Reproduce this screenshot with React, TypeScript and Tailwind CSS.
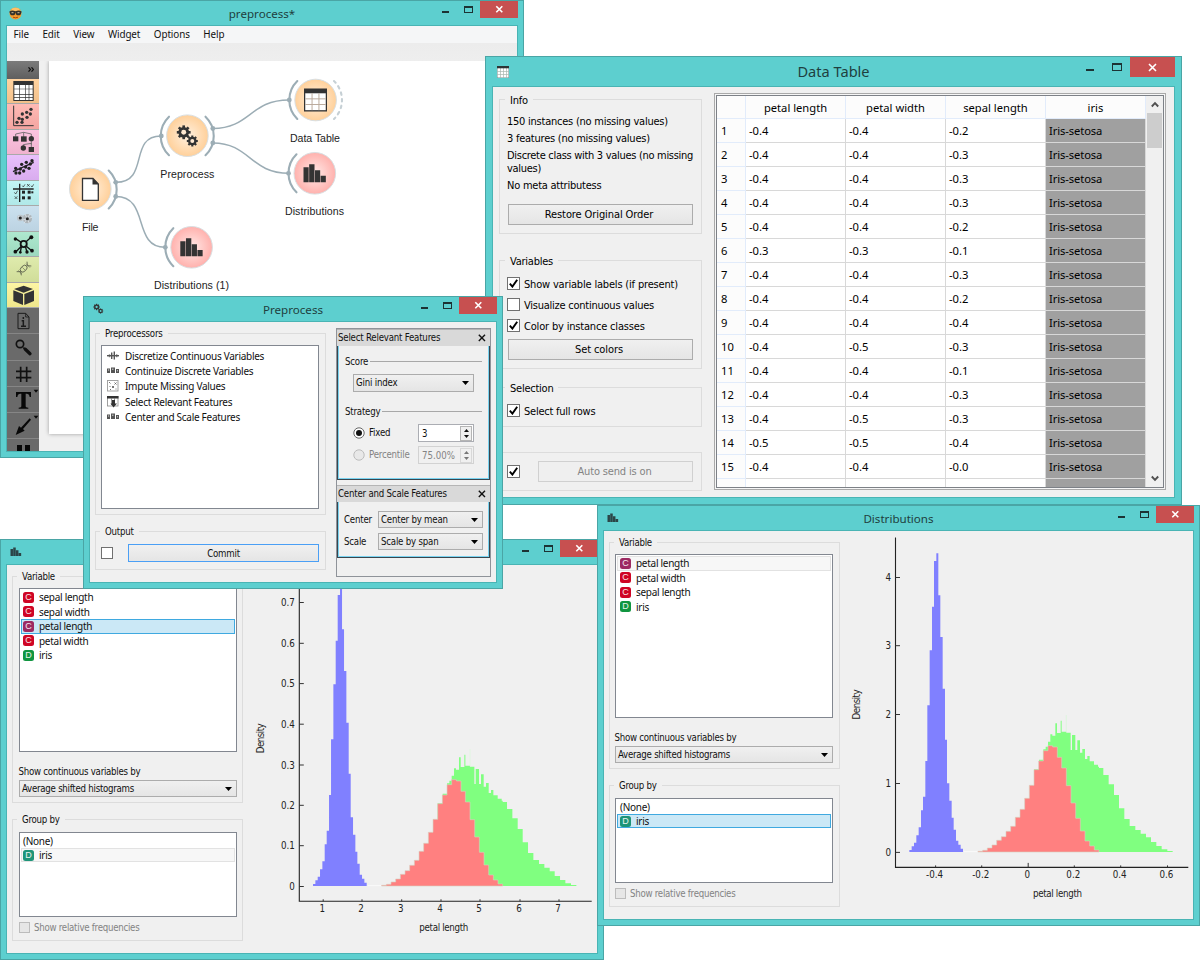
import React from "react";

const UI = "font-['Noto_Sans','Open_Sans',sans-serif]";
const TAHOMA = "font-['DejaVu_Sans_Condensed','DejaVu_Sans',sans-serif] [font-stretch:condensed]";

/* ---------- window frame ---------- */

type WinProps = {
  title: string;
  place: string;
  icon: React.ReactNode;
  large?: boolean;
  children: React.ReactNode;
};

function Win({ title, place, icon, large, children }: WinProps) {
  return (
    <section
      className={`absolute flex flex-col border border-[#4aa5a5] bg-[#5dcfcf] ${large ? "px-[6px] pb-[6px]" : "px-[5px] pb-[5px]"} ${place}`}
    >
      <header className={`flex shrink-0 items-center ${large ? "h-[29px]" : "h-[24px]"}`}>
        <div className="flex flex-1 items-center pl-[3px]">{icon}</div>
        <h2
          className={`whitespace-nowrap text-[#1f3f40] ${UI} ${large ? "-mt-[2px] mr-[3px] text-[14.6px] leading-[20px]" : "mr-[3px] text-[11.6px] leading-[17px]"}`}
        >
          {title}
        </h2>
        <div className="flex flex-1 justify-end self-start">
          {large ? (
            <svg width="46" height="20" viewBox="0 0 46 20">
              <rect x="2" y="12" width="8" height="2" fill="#1c3334" />
              <path d="M28 6h10v8h-10z M29 8v5h8v-5z" fill="#1c3334" fillRule="evenodd" />
            </svg>
          ) : (
            <svg width="40" height="18" viewBox="0 0 40 18">
              <rect x="2" y="10" width="7" height="2" fill="#1c3334" />
              <path d="M24 5h9v7h-9z M25 7v4h7v-4z" fill="#1c3334" fillRule="evenodd" />
            </svg>
          )}
          <div className={`flex items-center justify-center bg-[#c75050] ${large ? "h-[20px] w-[45px]" : "h-[17px] w-[38px]"}`}>
            <svg width="9" height="9" viewBox="0 0 9 9" stroke="#fff" strokeWidth="1.6">
              {large ? <path d="M1 1l7 7M8 1l-7 7" /> : <path d="M1.3 1.3l6 6M7.3 1.3l-6 6" />}
            </svg>
          </div>
        </div>
      </header>
      <div className="flex min-h-0 flex-1 overflow-hidden border border-[#49b4b4] bg-[#f0f0f0]">{children}</div>
    </section>
  );
}

/* ---------- shared widgets ---------- */

function Group({ label, box, children }: { label?: string; box: string; children: React.ReactNode }) {
  return (
    <fieldset className={`relative shrink-0 border border-[#dcdcdc] ${box}`}>
      {label && <div className="absolute -top-[7px] left-[4px] bg-[#f0f0f0] px-[5px] leading-[14px]">{label}</div>}
      {children}
    </fieldset>
  );
}

function Check({ on, size = "size-[13px]", off }: { on?: boolean; size?: string; off?: boolean }) {
  return (
    <span className={`flex shrink-0 items-center justify-center border ${size} ${off ? "border-[#bcbcbc] bg-[#e6e6e6]" : "border-[#707070] bg-white"}`}>
      {on && (
        <svg width="9" height="9" viewBox="0 0 9 9">
          <path d="M0.8 4.6L3.4 7.6L8.2 0.8" fill="none" stroke="#000" strokeWidth="1.9" />
        </svg>
      )}
    </span>
  );
}

function Combo({ value, box }: { value: string; box: string }) {
  return (
    <div
      className={`flex shrink-0 items-center justify-between whitespace-nowrap border border-[#acacac] bg-linear-to-b from-[#f0f0f0] to-[#e5e5e5] pl-[2px] pr-[4px] ${box}`}
    >
      <span>{value}</span>
      <svg width="7" height="4" viewBox="0 0 7 4">
        <path d="M0 0h7L3.5 4z" fill="#000" />
      </svg>
    </div>
  );
}

/* ---------- main window icons ---------- */

const toolCells = [
  {
    bg: "from-[#ffd3a0] to-[#f3c08a]",
    art: (
      <g>
        <rect x="19" y="6" width="61" height="60" fill="#333" />
        <path d="M22 18h15v11H22zM39 18h15v11H39zM56 18h9v11h-9zM67 18h10v11H67zM22 31h15v14H22zM39 31h15v14H39zM56 31h9v14h-9zM67 31h10v14H67zM22 47h15v7H22zM39 47h15v7H39zM56 47h9v7h-9zM67 47h10v7H67zM22 56h15v7H22zM39 56h15v7H39zM56 56h9v7h-9zM67 56h10v7H67z" fill="#fff" />
      </g>
    ),
  },
  {
    bg: "from-[#ffbab5] to-[#f4a5a1]",
    art: (
      <g fill="#333">
        <path d="M20 5v60h60" fill="none" stroke="#333" strokeWidth="3" />
        {[[30, 55], [36, 43], [46, 46], [46, 30], [60, 40], [59, 25], [70, 30], [72, 16], [45, 55]].map(([x, y]) => (
          <circle key={`${x}-${y}`} cx={x} cy={y} r="5" />
        ))}
      </g>
    ),
  },
  {
    bg: "from-[#fbc4e0] to-[#f0b2cf]",
    art: (
      <g fill="#333">
        <path d="M26 20V12L50 7L73 12V20M50 7v16M73 30v14M49 54V44L73 40v14" fill="none" stroke="#666" strokeWidth="2.5" />
        <rect x="18" y="19" width="16" height="15" />
        <rect x="42" y="19" width="17" height="16" />
        <circle cx="73" cy="26" r="8" />
        <circle cx="49" cy="54" r="8" />
        <rect x="65" y="51" width="16" height="15" />
      </g>
    ),
  },
  {
    bg: "from-[#e8c0fb] to-[#d9acef]",
    art: (
      <g fill="#222">
        <path d="M18 50L80 22" stroke="#222" strokeWidth="4" />
        {[[26, 40], [27, 54], [38, 54], [40, 42], [44, 28], [50, 48], [56, 36], [58, 22], [66, 40], [70, 27], [75, 17]].map(([x, y]) => (
          <circle key={`${x}-${y}`} cx={x} cy={y} r="5" />
        ))}
      </g>
    ),
  },
  {
    bg: "from-[#c3f6f6] to-[#b0e8e8]",
    art: (
      <g fill="#222">
        <path d="M18 24h62M38 8v55" stroke="#222" strokeWidth="4" />
        <path d="M46 14l3 4l5-8M60 9l8 8M68 9l-8 8M72 14l3 4l5-8M22 34l4 5l6-10M23 46l8 8M31 46l-8 8" fill="none" stroke="#222" strokeWidth="2" />
        <rect x="45" y="29" width="9" height="9" />
        <rect x="62" y="29" width="9" height="9" />
        <rect x="45" y="46" width="9" height="9" />
        <rect x="62" y="46" width="9" height="9" />
        <rect x="73" y="31" width="6" height="6" />
      </g>
    ),
  },
  {
    bg: "from-[#cbe1ef] to-[#bcd3e2]",
    art: (
      <g>
        <circle cx="40" cy="36" r="10" fill="#bcc4c9" />
        <circle cx="61" cy="38" r="14" fill="#aeb5b9" />
        <path d="M33 30l14 12M54 24l13 28M47 42l28-8M51 52l18-28" stroke="#dde5ea" strokeWidth="2.5" />
        <circle cx="40" cy="36" r="4.5" fill="#222" />
        <circle cx="61" cy="38" r="4.5" fill="#222" />
      </g>
    ),
  },
  {
    bg: "from-[#aee8cf] to-[#9cd9be]",
    art: (
      <g fill="#111">
        <path d="M50 36L26 20M50 36L72 16M50 36L26 60M50 36L74 56M44 40L40 60M54 40L60 60" stroke="#111" strokeWidth="4" />
        <circle cx="50" cy="36" r="12" />
        <circle cx="50" cy="36" r="6.5" fill="#a8e2c8" />
        <circle cx="25" cy="21" r="5" />
        <circle cx="73" cy="16" r="6" />
        <circle cx="25" cy="59" r="5.5" />
        <circle cx="40" cy="61" r="4" />
        <circle cx="60" cy="60" r="5" />
        <circle cx="75" cy="56" r="5.5" />
      </g>
    ),
  },
  {
    bg: "from-[#dfebad] to-[#d0dd99]",
    art: (
      <g fill="none" stroke="#5c604c" strokeWidth="2.6">
        <ellipse cx="50" cy="35" rx="12" ry="8" transform="rotate(-45 50 35)" />
        <path d="M29 44h12l2 11M60 14l1 12l12 1" />
        <path d="M34 40l10 11M57 20l12 12M46 31l8 8" strokeWidth="1.8" />
      </g>
    ),
  },
  {
    bg: "from-[#fcf5a4] to-[#efe78c]",
    art: (
      <g fill="#333">
        <path d="M50 8L78 18L50 29L21 18z" />
        <path d="M19 22L48 33V66L19 54z" />
        <path d="M81 22L52 33V66L81 54z" />
      </g>
    ),
  },
];

const darkCells = [
  <g key="info" fill="none" stroke="#1b1b1b" strokeWidth="3">
    <path d="M33 16h23l10 11v35H33z" />
    <path d="M56 16v11h10" strokeWidth="2.5" />
    <path d="M49 27v6M44 38h5v16M42 55h15" strokeWidth="4.5" />
  </g>,
  <g key="find" fill="none" stroke="#111">
    <circle cx="39" cy="30" r="11" strokeWidth="5" />
    <path d="M49 41l5 4" strokeWidth="5" />
    <path d="M55 46l14 13" strokeWidth="10" strokeLinecap="round" />
  </g>,
  <path key="grid" d="M41 17v46M59 17v46M27 31h46M27 50h46" stroke="#111" strokeWidth="5" />,
  <g key="text" fill="#080808">
    <path d="M27 15h45v15h-4c-1-7-4-10-9-10h-3v37c0 4 2 5 8 5v3H35v-3c6 0 8-1 8-5V20h-3c-5 0-8 3-9 10h-4z" />
    <path d="M80 8h14l-7 9z" />
  </g>,
  <g key="arrow" fill="#080808">
    <path d="M68 16l4 4L48 48l5 5L26 66l10-27l6 5z" />
    <path d="M80 8h14l-7 9z" />
  </g>,
  <path key="pause" d="M30 18h15v40H30zM54 18h15v40H54z" fill="#080808" />,
];

function Gear({ cx, cy, r, hole }: { cx: number; cy: number; r: number; hole: string }) {
  return (
    <g transform={`translate(${cx} ${cy})`}>
      <circle r={r * 0.78} fill="#333" />
      {[0, 45, 90, 135].map((a) => (
        <rect key={a} x={-r * 0.19} y={-r} width={r * 0.38} height={r * 2} fill="#333" transform={`rotate(${a})`} />
      ))}
      <circle r={r * 0.36} fill={hole} />
    </g>
  );
}

function TableGlyph({ x, y, s }: { x: number; y: number; s: number }) {
  return (
    <g transform={`translate(${x} ${y}) scale(${s / 24})`}>
      <rect width="24" height="24" fill="#333" />
      <path d="M1.3 5h21.4v17.6H1.3z" fill="#fff" />
      <path d="M8.4 5v17.6M15.6 5v17.6M1.3 10.8h21.4M1.3 16.7h21.4" stroke="#b9a89a" strokeWidth="1" />
    </g>
  );
}

function BarsGlyph({ x, y, s, fill = "#333" }: { x: number; y: number; s: number; fill?: string }) {
  return (
    <path
      transform={`translate(${x} ${y}) scale(${s / 66})`}
      d="M0 9h15.500v45H0zM17 0h16v54H17zM34.500 18h15.500v36H34.500zM51.500 35h15.500v19H51.500z"
      fill={fill}
    />
  );
}

const nodeText = "fill-[#222] font-['Liberation_Sans',Arial,sans-serif] text-[10.6px]";

function Workflow() {
  const arc = { fill: "none", stroke: "#9cadb5", strokeWidth: 2.1, strokeLinecap: "round" as const };
  return (
    <svg className="block" width="468" height="373" viewBox="49 61 468 373">
      <defs>
        <radialGradient id="orange">
          <stop offset="0" stopColor="#fff0df" />
          <stop offset="1" stopColor="#ffd09a" />
        </radialGradient>
        <radialGradient id="rose">
          <stop offset="0" stopColor="#ffe9e7" />
          <stop offset="1" stopColor="#ffb1ad" />
        </radialGradient>
      </defs>
      <g fill="none" stroke="#9cadb5" strokeWidth="1.5">
        <path d="M116 182.300C150 182.300 128 136 161 136" />
        <path d="M116 196.500C150 196.500 132 247.300 165 247.300" />
        <path d="M213 128.500C250 128.500 250 100 289 100" />
        <path d="M213 143C250 143 250 173.300 289 173.300" />
      </g>
      <g {...arc}>
        <path d="M108.700 170.500A26.600 26.600 0 0 1 108.700 208.500" />
        <path d="M169 116.700A26.600 26.600 0 0 0 169 155.200" />
        <path d="M205.500 116.700A26.600 26.600 0 0 1 205.500 155.200" />
        <path d="M173.300 228.200A26.600 26.600 0 0 0 173.300 266.200" />
        <path d="M297.300 81A26.600 26.600 0 0 0 297.300 119" />
        <path d="M296.500 154.300A26.600 26.600 0 0 0 296.500 192.300" />
        <path d="M334 81A26.600 26.600 0 0 1 334 119" stroke="#c6d0d5" strokeDasharray="2.500 4.200" />
      </g>
      <g fill="#9cadb5">
        {[[115.7, 182.3], [115.7, 196.5], [161.3, 136], [165.3, 247.3], [212.8, 128.5], [212.8, 143], [289.3, 100], [288.5, 173.3]].map(([x, y]) => (
          <circle key={`${x}-${y}`} cx={x} cy={y} r="2.400" />
        ))}
      </g>
      <g stroke="#d9dfe2" strokeWidth="1">
        <circle cx="90.300" cy="189" r="20.800" fill="url(#orange)" />
        <circle cx="187.400" cy="135.700" r="20.800" fill="url(#orange)" />
        <circle cx="315.600" cy="100" r="20.800" fill="url(#orange)" />
        <circle cx="191.600" cy="247.300" r="20.800" fill="url(#rose)" />
        <circle cx="314.800" cy="173.300" r="20.800" fill="url(#rose)" />
      </g>
      <path d="M82.500 178.500h10.500l5.300 5.500v16.300h-15.800z" fill="#fff" stroke="#333" strokeWidth="1.300" />
      <path d="M92.500 178l6.300 6.500h-6.300z" fill="#333" />
      <Gear cx={183.7} cy={132.3} r={6.9} hole="#ffe9d2" />
      <Gear cx={192.3} cy={141} r={5.5} hole="#ffe9d2" />
      <TableGlyph x={304} y={88.5} s={23} />
      <BarsGlyph x={180.3} y={238.3} s={22} />
      <BarsGlyph x={303.5} y={164.2} s={22} />
      <g className={nodeText}>
        <text x="82" y="230.800" textLength="16.500">File</text>
        <text x="160.300" y="177.500" textLength="54">Preprocess</text>
        <text x="154" y="289" textLength="75">Distributions (1)</text>
        <text x="290" y="142" textLength="50">Data Table</text>
        <text x="285" y="215" textLength="59">Distributions</text>
      </g>
    </svg>
  );
}

function MainWindow() {
  return (
    <Win
      title="preprocess*"
      place="left-0 top-0 h-[458px] w-[524px]"
      icon={
        <svg width="13" height="13" viewBox="0 0 13 13">
          <circle cx="6.500" cy="6.500" r="6" fill="#f49b2c" />
          <ellipse cx="6.500" cy="2.800" rx="4" ry="2" fill="#ffc267" />
          <path d="M0.500 4.200h12v1.500h-12z" fill="#33302a" />
          <ellipse cx="3.600" cy="5.900" rx="2.700" ry="2.300" fill="#33302a" />
          <ellipse cx="9.400" cy="5.900" rx="2.700" ry="2.300" fill="#33302a" />
          <path d="M2.500 5.600h2M8.500 5.600h2" stroke="#b5a684" strokeWidth="1.200" />
          <path d="M4 10.200q2.500 1.200 5 0" stroke="#a34c10" fill="none" />
        </svg>
      }
    >
      <div className="flex flex-1 flex-col">
        <nav className={`flex h-[17px] shrink-0 items-center gap-[13.500px] bg-[#f5f6f7] pl-[6.500px] text-[9.900px] tracking-[-0.100px] text-[#111] ${UI}`}>
          {["File", "Edit", "View", "Widget", "Options", "Help"].map((m) => (
            <span key={m}>{m}</span>
          ))}
        </nav>
        <div className="h-[18px] shrink-0 bg-linear-to-b from-[#ececec] to-[#eee]" />
        <div className="flex min-h-0 flex-1">
          <div className="w-[32px] shrink-0 overflow-hidden">
            <div className="flex h-[17.500px] items-center justify-end bg-linear-to-b from-[#7b7b7b] to-[#5f5f5f] pr-[5px]">
              <svg width="6" height="5" viewBox="0 0 6 5" fill="none" stroke="#111" strokeWidth="1.200">
                <path d="M0.500 0.300l2 2.200l-2 2.200M3.500 0.300l2 2.200l-2 2.200" />
              </svg>
            </div>
            {toolCells.map((c, i) => (
              <div key={i} className={`h-[25.500px] border-b border-[#a9a9a9] bg-linear-to-b ${c.bg}`}>
                <svg width="32" height="25" viewBox="0 0 96 75">{c.art}</svg>
              </div>
            ))}
            {darkCells.map((c, i) => (
              <div key={i} className="h-[26.300px] border-b border-[#868686] bg-[#6a6a6a]">
                <svg width="32" height="26" viewBox="0 0 96 78">{c}</svg>
              </div>
            ))}
          </div>
          <div className="min-w-0 flex-1 overflow-hidden pl-[10px]">
            <div className="h-[373px] w-[480px] bg-white shadow-[0_0_4px_rgba(0,0,0,0.35)]">
              <Workflow />
            </div>
          </div>
        </div>
      </div>
    </Win>
  );
}

/* ---------- data table window ---------- */

const rows = [
  ["-0.4", "-0.4", "-0.2"], ["-0.4", "-0.4", "-0.3"], ["-0.4", "-0.4", "-0.3"], ["-0.4", "-0.4", "-0.3"],
  ["-0.4", "-0.4", "-0.2"], ["-0.3", "-0.3", "-0.1"], ["-0.4", "-0.4", "-0.3"], ["-0.4", "-0.4", "-0.2"],
  ["-0.4", "-0.4", "-0.4"], ["-0.4", "-0.5", "-0.3"], ["-0.4", "-0.4", "-0.1"], ["-0.4", "-0.4", "-0.3"],
  ["-0.4", "-0.5", "-0.3"], ["-0.5", "-0.5", "-0.4"], ["-0.4", "-0.4", "-0.0"], ["", "", ""],
];

function CheckLine({ on, children, box }: { on?: boolean; box: string; children: React.ReactNode }) {
  return (
    <div className={`flex h-[13px] items-center gap-[4px] ${box}`}>
      <Check on={on} />
      <span className="pt-[3px]">{children}</span>
    </div>
  );
}

const button =
  "flex shrink-0 items-center justify-center border border-[#acacac] bg-linear-to-b from-[#f0f0f0] to-[#e5e5e5] pt-[2px] pr-[3px] tracking-[-0.100px]";

function DataTableWindow() {
  return (
    <Win
      large
      title="Data Table"
      place="left-[485px] top-[56px] h-[449px] w-[697px]"
      icon={
        <svg className="ml-[2px]" width="12" height="12" viewBox="0 0 12 12">
          <rect width="12" height="12" fill="#fff" stroke="#7a8a8a" />
          <path d="M3.500 2v10M6.500 2v10M9.500 2v10M0 5.500h12M0 8.500h12" stroke="#a9b8b0" strokeWidth=".7" />
          <rect width="12" height="2.300" fill="#2d3435" />
        </svg>
      }
    >
      <div className={`flex w-[221px] shrink-0 flex-col whitespace-nowrap pl-[6px] pt-[12px] text-[11px] tracking-[-0.240px] text-black ${TAHOMA}`}>
        <Group label="Info" box="h-[135px] w-[203px] pl-[7px] pt-[15px] [&>div:first-child]:-top-[6px] [&>div:first-child]:left-[5px]">
          <div className="flex flex-col gap-[3px] leading-[14px]">
            <p>150 instances (no missing values)</p>
            <p>3 features (no missing values)</p>
            <p className="leading-[13px] tracking-[-0.300px]">
              Discrete class with 3 values (no missing
              <br />
              values)
            </p>
            <p className="mt-[1px]">No meta attributess</p>
          </div>
          <div className={`ml-px mt-[11px] h-[21px] w-[185px] ${button}`}>Restore Original Order</div>
        </Group>
        <Group label="Variables" box="mt-[26px] h-[109px] w-[203px] pl-[7px] pt-[16px] [&>div:first-child]:-top-[6px] [&>div:first-child]:left-[5px]">
          <CheckLine on box="tracking-[-0.180px]">Show variable labels (if present)</CheckLine>
          <CheckLine box="mt-[8px]">Visualize continuous values</CheckLine>
          <CheckLine on box="mt-[8px] tracking-[-0.180px]">Color by instance classes</CheckLine>
          <div className={`ml-px mt-[7px] h-[21px] w-[185px] ${button}`}>Set colors</div>
        </Group>
        <Group label="Selection" box="mt-[18px] h-[40px] w-[203px] pl-[7px] pt-[16px] [&>div:first-child]:-top-[6px] [&>div:first-child]:left-[5px]">
          <CheckLine on box="">Select full rows</CheckLine>
        </Group>
        <Group box="mt-[25px] h-[39px] w-[203px] pl-[7px] pt-[8px]">
          <div className="flex items-center">
            <Check on />
            <div className="ml-[18px] flex h-[21px] w-[155px] items-center justify-center border border-[#d0d0d0] bg-[#efefef] pr-[2px] pt-[2px] tracking-[-0.150px] text-[#838383]">
              Auto send is on
            </div>
          </div>
        </Group>
      </div>
      <div className="mt-[6px] h-[397px] w-[452px] border border-[#a9a9a9] bg-[#f6f6f6] p-px">
        <div className={`flex h-[393px] overflow-hidden border border-[#7d8187] bg-white text-[11.200px] text-black ${UI}`}>
          <div className="w-[429px] shrink-0">
            <div className="flex h-[23px] border-b border-[#e2ecfb] bg-[#fcfcfc]">
              <div className="w-[29px] border-r border-[#e2ecfb]" />
              {["petal length", "petal width", "sepal length", "iris"].map((h) => (
                <div key={h} className="flex w-[100px] items-center justify-center border-r border-[#e2ecfb] pt-[2px]">{h}</div>
              ))}
            </div>
            {rows.map((r, i) => (
              <div key={i} className="flex h-[24px] leading-[23px]">
                <div className="w-[29px] border-b border-r border-[#e2ecfb] bg-[#fcfcfc] pl-[4px]">{i < 15 ? i + 1 : ""}</div>
                {r.map((v, j) => (
                  <div key={j} className="w-[100px] border-b border-r border-[#d8d8d8] pl-[3px]">{v}</div>
                ))}
                <div className="w-[100px] border-b border-r border-[#d8d8d8] bg-[#a0a0a0] pl-[3px] tracking-[-0.100px]">{i < 15 ? "Iris-setosa" : ""}</div>
              </div>
            ))}
          </div>
          <div className="flex flex-1 flex-col items-center justify-between bg-[#f0f0f0]">
            <div className="flex w-full flex-col items-center">
              <svg className="my-[5px]" width="8" height="7" viewBox="0 0 8 7" fill="none" stroke="#505050" strokeWidth="1.900">
                <path d="M0.800 5.500L4 2.200L7.200 5.500" />
              </svg>
              <div className="h-[35px] w-[15px] bg-[#cdcdcd]" />
            </div>
            <svg className="mb-[5px]" width="8" height="7" viewBox="0 0 8 7" fill="none" stroke="#505050" strokeWidth="1.900">
              <path d="M0.800 1.500L4 4.800L7.200 1.500" />
            </svg>
          </div>
        </div>
      </div>
    </Win>
  );
}

/* ---------- preprocess window ---------- */

const discretize = (
  <g fill="#555">
    <path d="M0 5h12v1.400H0z" />
    <path d="M4 2.500h1.400v6.500H4zM6.600 1.500H8v8H6.600z" />
    <path d="M1.800 4.200h1.400v3H1.800zM9 4.200h1.400v3H9z" opacity=".7" />
  </g>
);
const continuize = (
  <g fill="#555">
    <rect x="0" y="3.500" width="3" height="4.500" />
    <rect x="4" y="2.500" width="4" height="5.500" />
    <rect x="9" y="4" width="3" height="4" />
    <path d="M1 5h1.200M5 4.200h1.500M10 5.800h1" stroke="#ddd" />
  </g>
);
const impute = (
  <g stroke="#666" strokeWidth=".9" fill="none">
    <rect x=".5" y=".5" width="10.500" height="10.500" stroke="#9a9a9a" />
    <path d="M2 2l1.500 1.500M7.500 2.500l2 2M9.500 2.500l-2 2M2.500 6l1 1M5 6l2 2M7 6l-2 2M3 9.500h1M8.500 9h1" />
  </g>
);
const select = (
  <g>
    <rect x=".5" y=".5" width="10.500" height="9.500" fill="#fff" stroke="#888" strokeWidth=".8" />
    <rect x="0" y="0" width="11.500" height="2.500" fill="#333" />
    <path d="M4.500 2v7M7.500 2v7" stroke="#777" strokeWidth=".8" />
    <path d="M5 4h3v3.500h2L6.500 11.500L3.500 7.500H5z" fill="#333" />
  </g>
);

const preprocessors = [
  { name: "Discretize Continuous Variables", art: discretize },
  { name: "Continuize Discrete Variables", art: continuize },
  { name: "Impute Missing Values", art: impute },
  { name: "Select Relevant Features", art: select },
  { name: "Center and Scale Features", art: continuize },
];

function Panel({ title, body, children }: { title: string; body: string; children: React.ReactNode }) {
  return (
    <div>
      <div className="flex h-[17px] items-center justify-between border-t border-[#b5b5b5] bg-[#d9d9d9] pl-[1px] pr-[4px]">
        <span>{title}</span>
        <svg width="8" height="8" viewBox="0 0 8 8" stroke="#111" strokeWidth="1.400">
          <path d="M.8.8l6.200 6.200M7 .8L.8 7" />
        </svg>
      </div>
      <div className="border border-t-0 border-[#39454d]">
        <div className={`border border-t-0 border-[#7ad3f0] ${body}`}>{children}</div>
      </div>
    </div>
  );
}

function Rule({ label, box }: { label: string; box: string }) {
  return (
    <div className={`flex h-[14px] items-center gap-[2px] ${box}`}>
      <span>{label}</span>
      <span className="mt-[-1px] h-px flex-1 bg-[#a8a8a8]" />
    </div>
  );
}

function Spin({ value, off }: { value: string; off?: boolean }) {
  return (
    <div className={`flex h-[18px] w-[56px] items-center justify-between border pl-[3px] pr-[1px] ${off ? "border-[#d2d2d2] text-[#838383]" : "border-[#abadb3] bg-white"}`}>
      <span className="pt-[2px] tracking-normal">{value}</span>
      <div className={`flex h-[15px] w-[12px] flex-col items-center justify-center gap-[3px] border bg-[#f0f0f0] ${off ? "border-[#d8d8d8]" : "border-[#b5b5b5]"}`}>
        <svg width="5" height="3" viewBox="0 0 5 3"><path d="M0 3h5L2.500 0z" fill={off ? "#777" : "#111"} /></svg>
        <svg width="5" height="3" viewBox="0 0 5 3"><path d="M0 0h5L2.500 3z" fill={off ? "#777" : "#111"} /></svg>
      </div>
    </div>
  );
}

function PreprocessWindow() {
  return (
    <Win
      title="Preprocess"
      place="left-[83px] top-[296px] h-[293px] w-[420px]"
      icon={
        <svg className="ml-px" width="12" height="12" viewBox="0 0 12 12">
          <Gear cx={3.6} cy={4} r={3.2} hole="#5dcfcf" />
          <Gear cx={7.6} cy={8} r={2.6} hole="#5dcfcf" />
        </svg>
      }
    >
      <div className={`flex flex-1 whitespace-nowrap text-[9.600px] leading-[14px] tracking-[-0.200px] text-[#111] ${TAHOMA}`}>
        <div className="flex w-[246px] flex-col pl-[5px] pt-[11px]">
          <Group label="Preprocessors" box="h-[182px] w-[231px] pl-[5px] pt-[11px]">
            <ul className={`h-[164px] w-[218px] border border-[#828790] bg-white pt-[2px] text-[10px] tracking-[-0.280px] ${UI}`}>
              {preprocessors.map((p) => (
                <li key={p.name} className="flex h-[15.300px] items-center gap-[6px] pl-[5px]">
                  <svg width="12" height="12" viewBox="0 0 12 12">{p.art}</svg>
                  <span>{p.name}</span>
                </li>
              ))}
            </ul>
          </Group>
          <Group label="Output" box="mt-[16px] h-[39px] w-[231px] pl-[5px] pt-[12px]">
            <div className="flex items-center">
              <Check size="size-[12px]" />
              <div className="ml-[15px] flex h-[18px] w-[191px] items-center justify-center border border-[#4a9ff5] bg-linear-to-b from-[#f0f0f0] to-[#e5e5e5] pt-px">
                Commit
              </div>
            </div>
          </Group>
        </div>
        <div className="mt-[6px] h-[249px] w-[155px] border border-[#8f9399]">
          <Panel title="Select Relevant Features" body="h-[133px] pl-[6px] pr-[6px] pt-[9px]">
            <Rule label="Score" box="" />
            <Combo value="Gini index" box="ml-[8px] mt-[5px] h-[18px] w-[121px]" />
            <Rule label="Strategy" box="mt-[13px]" />
            <div className="mt-[5px] flex h-[18px] items-center pl-[8px]">
              <svg width="12" height="12" viewBox="0 0 12 12">
                <circle cx="6" cy="6" r="5.200" fill="#fff" stroke="#666" />
                <circle cx="6" cy="6" r="3" fill="#111" />
              </svg>
              <span className="ml-[4px] w-[49px]">Fixed</span>
              <Spin value="3" />
            </div>
            <div className="mt-[4px] flex h-[18px] items-center pl-[8px] text-[#838383]">
              <svg width="12" height="12" viewBox="0 0 12 12">
                <circle cx="6" cy="6" r="5.200" fill="#e8e8e8" stroke="#bcbcbc" />
              </svg>
              <span className="ml-[4px] w-[49px]">Percentile</span>
              <Spin value="75.00%" off />
            </div>
          </Panel>
          <div className="h-[5px]" />
          <Panel title="Center and Scale Features" body="h-[55px] pl-[5px] pt-[9px]">
            <div className="flex items-center">
              <span className="w-[34px]">Center</span>
              <Combo value="Center by mean" box="h-[17px] w-[105px]" />
            </div>
            <div className="mt-[5px] flex items-center">
              <span className="w-[34px]">Scale</span>
              <Combo value="Scale by span" box="h-[17px] w-[105px]" />
            </div>
          </Panel>
        </div>
      </div>
    </Win>
  );
}

/* ---------- distributions windows ---------- */

type Mark = "C" | "D" | "";
type Item = { name: string; mark: Mark; state?: "selected" | "current" };

function Items({ items, box }: { items: Item[]; box: string }) {
  return (
    <ul className={`w-[218px] shrink-0 border border-[#828790] bg-white px-px text-[10px] tracking-[-0.280px] text-[#111] ${UI} ${box}`}>
      {items.map((it) => {
        const c = it.mark === "C";
        const tone = it.state ? (c ? "bg-[#9c2a62]" : "bg-[#1d9478]") : c ? "bg-[#cf0525]" : "bg-[#109540]";
        const row =
          it.state === "selected"
            ? "border-[#3fa9e0] bg-[#cbe8f6]"
            : it.state === "current"
              ? "border-[#e2e2e2] bg-[#f7f7f7]"
              : "border-transparent";
        return (
          <li key={it.name} className={`flex h-[14.500px] items-center border pl-[1px] ${row}`}>
            {it.mark && (
              <span className={`mr-[5px] flex size-[11px] items-center justify-center rounded-[2.500px] text-[9px] leading-none tracking-normal text-white/90 ${tone} font-['Liberation_Sans',sans-serif]`}>
                {it.mark}
              </span>
            )}
            <span>{it.name}</span>
          </li>
        );
      })}
    </ul>
  );
}

const BASE = 1056;
const blue = [
  [208, 1050], [215, 1039], [222, 1028], [229, 1006], [236, 982], [243, 931], [249, 890], [256, 783], [262, 616], [269, 451],
  [276, 320], [282, 183], [289, 160], [295, 286], [301, 411], [308, 566], [315, 719], [321, 850], [328, 902], [335, 953],
  [341, 989], [348, 1022], [355, 1034], [362, 1046], [369, BASE],
];
const red = [
  [414, 1054], [428, 1051], [442, 1044], [456, 1035], [470, 1021], [484, 1010], [498, 994], [512, 979], [526, 952], [540, 928],
  [554, 895], [568, 856], [582, 809], [596, 783], [610, 752], [624, 737], [638, 741], [652, 772], [665, 804], [679, 857],
  [693, 909], [707, 955], [721, 993], [735, 1023], [749, 1038], [763, 1050], [777, BASE],
];
const green = [
  [582, 808], [597, 779], [610, 748], [617, 740], [624, 725], [631, 703], [637, 707], [646, 670], [651, 699], [662, 662],
  [665, 695], [679, 698], [692, 750], [696, 705], [706, 750], [712, 721], [720, 758], [727, 747], [735, 777], [742, 768],
  [749, 784], [762, 794], [774, 800], [777, 804], [790, 825], [806, 853], [822, 885], [837, 925], [853, 957], [869, 978],
  [886, 990], [902, 1001], [918, 1012], [933, 1026], [949, 1038], [965, 1048], [982, 1053], [998, BASE],
];

const steps = (pts: number[][]) => `M${pts[0][0]} ${BASE}` + pts.map(([x, y]) => `H${x}V${y}`).join("") + "Z";

type Tick = { at: number; label: string };
type ChartProps = { view: string; shift: string; axis: [number, number, number, number]; caption: number; xt: Tick[]; yt: Tick[] };

function Chart({ view, shift, axis, caption, xt, yt }: ChartProps) {
  const [ax, top, ay, right] = axis;
  return (
    <svg className="ml-[4px] block shrink-0" width="350" height="388" viewBox={view}>
      <g transform={shift}>
        <path d={`M372 ${BASE - 1}H412`} stroke="#fafafa" strokeWidth="3" />
        <path d={steps(blue)} fill="#8080ff" />
        <path d={steps(green)} fill="#80ff80" />
        <path d="M679 697V645" stroke="#d8f8d8" strokeWidth="2" />
        <path d={steps(red)} fill="#ff8080" stroke="#d8d0c0" strokeWidth="1.800" />
      </g>
      <path d={`M${ax} ${top}V${ay}H${right}`} fill="none" stroke="#222" strokeWidth="1.100" />
      {yt.map((t) => (
        <path key={t.label} d={`M${ax} ${t.at}h4.500`} stroke="#333" />
      ))}
      {xt.map((t) => (
        <path key={t.label} d={`M${t.at} ${ay}v${t.label === "0" ? -4.5 : -2}`} stroke="#333" />
      ))}
      <g className={`fill-[#222] text-[9.700px] ${TAHOMA}`}>
        {yt.map((t) => (
          <text key={t.label} x={ax - 4.5} y={t.at + 3.5} textAnchor="end">{t.label}</text>
        ))}
        {xt.map((t) => (
          <text key={t.label} x={t.at - 1} y={ay + 10.5} textAnchor="middle">{t.label}</text>
        ))}
        <text x={caption} y={ay + 29.5} textLength="49">petal length</text>
        <text transform={`translate(${ax - 35.5} ${ay - 148}) rotate(-90)`} textLength="30">Density</text>
      </g>
    </svg>
  );
}

type DistributionsProps = { place: string; inset: string; variables: Item[]; groups: Item[]; chart: React.ReactNode };

function Distributions({ place, inset, variables, groups, chart }: DistributionsProps) {
  return (
    <Win
      title="Distributions"
      place={place}
      icon={
        <svg className="ml-[1px]" width="12" height="10" viewBox="0 0 12 10">
          <BarsGlyph x={0.5} y={0.5} s={10.5} fill="#2b4547" />
        </svg>
      }
    >
      <div className={`flex w-[236px] shrink-0 flex-col whitespace-nowrap pl-[5px] pt-[11px] text-[9.600px] leading-[14px] tracking-[-0.250px] text-[#111] ${TAHOMA}`}>
        <Group label="Variable" box={`h-[227px] w-[231px] pt-[11px] ${inset}`}>
          <Items items={variables} box="h-[164px] pt-[1px]" />
          <div className="-ml-[0.500px] mt-[13px]">Show continuous variables by</div>
          <Combo value="Average shifted histograms" box="mt-px h-[17px] w-[218px]" />
        </Group>
        <Group label="Group by" box={`mt-[16px] h-[122px] w-[231px] pt-[12px] ${inset}`}>
          <Items items={groups} box="h-[85px] pt-[0.400px]" />
          <div className="mt-[5px] flex h-[11px] items-center gap-[4px] text-[#838383]">
            <Check size="size-[11px]" off />
            <span>Show relative frequencies</span>
          </div>
        </Group>
      </div>
      {chart}
    </Win>
  );
}

function LeftDistributions() {
  return (
    <Distributions
      place="left-0 top-[539px] h-[421px] w-[604px]"
      inset="pl-[6px]"
      variables={[
        { name: "sepal length", mark: "C" },
        { name: "sepal width", mark: "C" },
        { name: "petal length", mark: "C", state: "selected" },
        { name: "petal width", mark: "C" },
        { name: "iris", mark: "D" },
      ]}
      groups={[{ name: "(None)", mark: "" }, { name: "iris", mark: "D", state: "current" }]}
      chart={
        <Chart
          view="247 565 350 388"
          shift="translate(243.700 534) scale(.33333)"
          axis={[299.3, 571, 901.3, 591.7]}
          caption={419.3}
          xt={[323.2, 362, 401.7, 441, 480, 520, 559].map((at, i) => ({ at, label: String(i + 1) }))}
          yt={[886.5, 845.7, 805.3, 765, 724.2, 683.6, 643.3, 602.5].map((at, i) => ({ at, label: i ? `0.${i}` : "0" }))}
        />
      }
    />
  );
}

function RightDistributions() {
  return (
    <Distributions
      place="left-[597px] top-[505px] h-[421px] w-[603px]"
      inset="pl-[5px] [&_li]:pl-[2px]"
      variables={[
        { name: "petal length", mark: "C", state: "current" },
        { name: "petal width", mark: "C" },
        { name: "sepal length", mark: "C" },
        { name: "iris", mark: "D" },
      ]}
      groups={[{ name: "(None)", mark: "" }, { name: "iris", mark: "D", state: "selected" }]}
      chart={
        <Chart
          view="844 531 350 388"
          shift="translate(840 500) scale(.33333)"
          axis={[895.5, 537.5, 867.4, 1188.3]}
          caption={1033}
          xt={[935.6, 981.7, 1028.2, 1074.3, 1120.7, 1167.5].map((at, i) => ({
            at,
            label: ["-0.4", "-0.2", "0", "0.2", "0.4", "0.6"][i],
          }))}
          yt={[852.4, 783.5, 714.5, 645.7, 577.5].map((at, i) => ({ at, label: String(i) }))}
        />
      }
    />
  );
}

export default function App() {
  return (
    <main className="relative h-[960px] w-[1200px] overflow-hidden bg-white">
      <MainWindow />
      <DataTableWindow />
      <LeftDistributions />
      <RightDistributions />
      <PreprocessWindow />
    </main>
  );
}
